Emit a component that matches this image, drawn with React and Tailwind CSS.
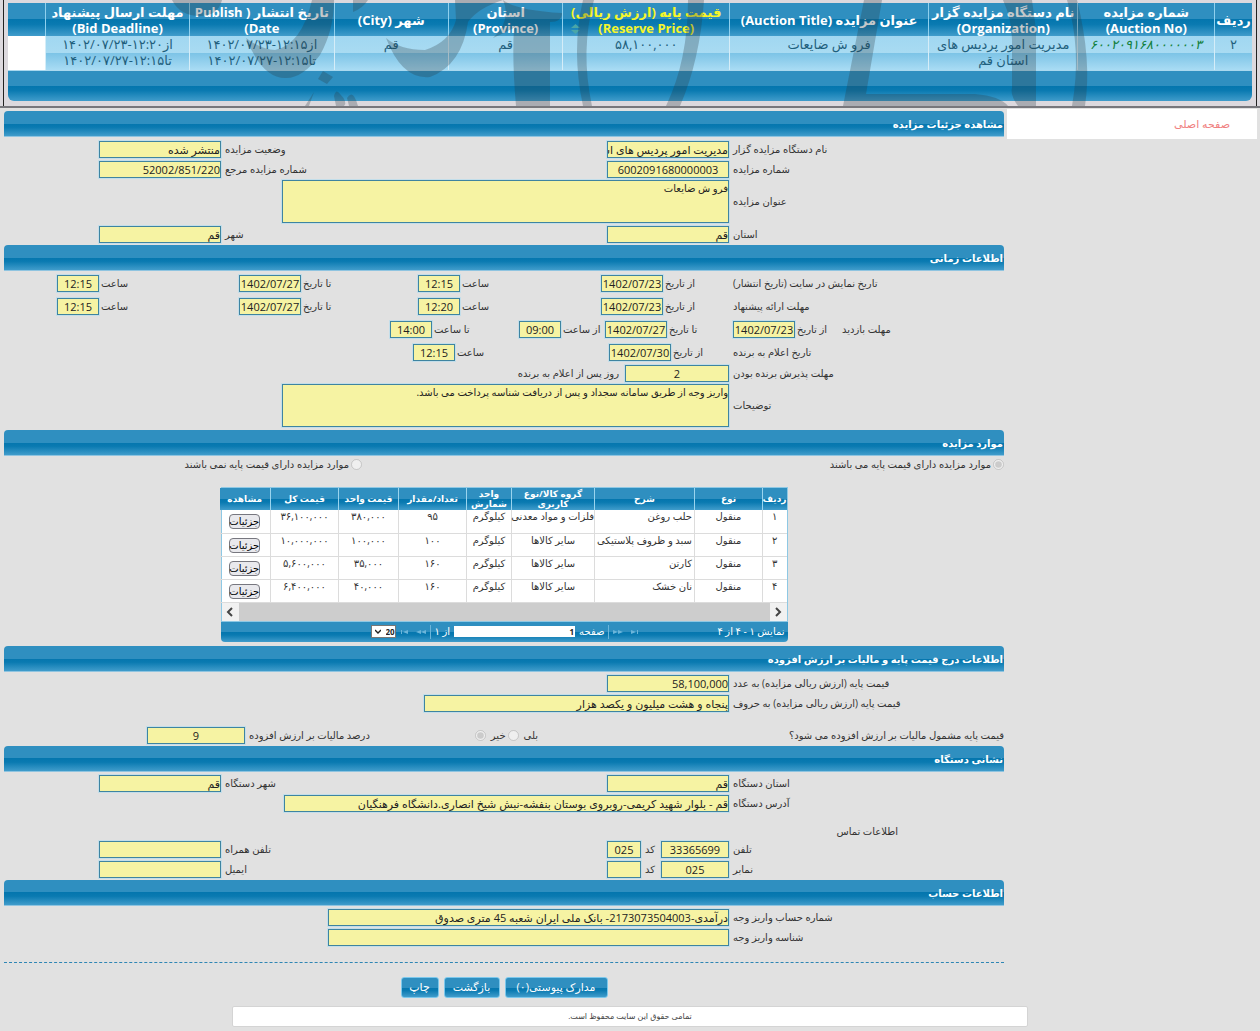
import React from 'react';
import clsx from 'clsx';

const glossyBar = 'bg-[linear-gradient(to_bottom,#2f8fc0_0%,#2f8fc0_50%,#0476ae_50%,#0a7ab1_65%,#409ccb_100%)]';
const glossyRow = 'bg-[linear-gradient(to_bottom,#a0d7f1_0%,#a9dbf2_50%,#7cc3e6_50%,#a9dcf4_100%)]';

const auctionColumns = [
    { title: ['ردیف'], width: 'w-[3%]' },
    { title: ['شماره مزایده', '(Auction No)'], width: 'w-[11%]' },
    { title: ['نام دستگاه مزایده گزار', '(Organization)'], width: 'w-[12%]' },
    { title: ['عنوان مزایده (Auction Title)'], width: 'w-[16%]' },
    { title: ['قیمت پایه (ارزش ریالی)', '(Reserve Price)'], width: 'w-[13.4%]', sorted: true },
    { title: ['استان', '(Province)'], width: 'w-[9.2%]' },
    { title: ['شهر (City)'], width: 'w-[9.2%]' },
    { title: ['تاریخ انتشار ( Publish', 'Date)'], width: 'w-[11.6%]' },
    { title: ['مهلت ارسال پیشنهاد', '(Bid Deadline)'], width: 'w-[11.6%]' },
    { title: [''], width: 'w-[3%]' }
];

const items = [
    { id: '۱', type: 'منقول', name: 'حلب روغن', group: 'فلزات و مواد معدنی', unit: 'کیلوگرم', count: '۹۵', price: '۳۸۰,۰۰۰', total: '۳۶,۱۰۰,۰۰۰' },
    { id: '۲', type: 'منقول', name: 'سبد و ظروف پلاستیکی', group: 'سایر کالاها', unit: 'کیلوگرم', count: '۱۰۰', price: '۱۰۰,۰۰۰', total: '۱۰,۰۰۰,۰۰۰' },
    { id: '۳', type: 'منقول', name: 'کارتن', group: 'سایر کالاها', unit: 'کیلوگرم', count: '۱۶۰', price: '۳۵,۰۰۰', total: '۵,۶۰۰,۰۰۰' },
    { id: '۴', type: 'منقول', name: 'نان خشک', group: 'سایر کالاها', unit: 'کیلوگرم', count: '۱۶۰', price: '۴۰,۰۰۰', total: '۶,۴۰۰,۰۰۰' }
];

const itemColumns = [
    { title: 'ردیف', width: 'w-[24px]' },
    { title: 'نوع', width: 'w-[68px]' },
    { title: 'شرح', width: 'w-[100px]' },
    { title: 'گروه کالا/نوع کاربری', width: 'w-[83px]' },
    { title: 'واحد شمارش', width: 'w-[45px]' },
    { title: 'تعداد/مقدار', width: 'w-[68px]' },
    { title: 'قیمت واحد', width: 'w-[60px]' },
    { title: 'قیمت کل', width: 'w-[68px]' },
    { title: 'مشاهده', width: 'w-[51px]' }
];

const boxStyle = 'border border-[#3f84a0] bg-[#f6f3a3] text-[#222] outline-none shadow-[0_0_0_1px_#c3deea]';

function Watermark() {
    return (
        <svg className="absolute inset-0 w-full h-full pointer-events-none" viewBox="0 0 1260 106" preserveAspectRatio="none" aria-hidden="true">
            <g fill="#2b3a42" fillOpacity="0.28">
                <path d="M172 0H222Q218 16 200 16Q180 16 172 0Z" />
                <path d="M246 38Q262 50 275 50Q302 44 312 0H334Q334 30 320 55Q302 79 285 78Q262 78 246 38Z" />
                <path d="M323 71L333 77L327 84L318 79Z" />
                <path d="M314 92L305 106H309Z" />
                <path d="M334 96Q336 88 340 94Q348 102 344 106H336Z" />
                <path d="M347 98Q353 88 358 106H349Z" />
                <path d="M353 0H368Q363 8 353 12Z" />
                <path d="M386 38Q400 50 425 50Q450 42 456 20L455 0H503Q478 8 468 22Q462 65 430 77Q402 80 386 38Z" />
                <path d="M503 0Q515 10 562 13Q562 22 550 22V106H516Q512 60 514 28L493 38Q512 20 503 0Z" />
                <path d="M583 0H594Q580 50 592 106H583Q571 50 583 0Z" />
                <path d="M688 0H704Q700 60 680 106H666Q688 60 688 0Z" />
                <path d="M864 0H882L866 94H975Q1000 96 1008 106H843Z" />
                <path d="M1003 0H1032L1036 30V106H1018Q1010 95 1012 88V40Q1012 20 1003 0Z" />
                <path d="M1067 0H1077Q1092 60 1085 106H1072Q1082 50 1067 0Z" />
            </g>
        </svg>
    );
}

function AuctionSummary() {
    const cell = 'border-l border-[#d5edf8] last:border-l-0 align-top px-[3px]';
    return (
        <header className="relative bg-[#dcd9de] border-b-2 border-[#77777c] px-[3px]">
            <div className="border-l border-r border-[#222] pt-[3px] pb-[5px] px-[4px]">
                <table className="w-full table-fixed border-collapse text-[13px] leading-[16px] text-center">
                    <thead>
                        <tr className={clsx('h-[33px] text-white', glossyBar)}>
                            {auctionColumns.map((column, index) => (
                                <th key={index} className={clsx('p-0 font-bold align-middle whitespace-nowrap border-l border-[#8fd0ee] last:border-l-0', column.width, column.sorted && 'relative text-[#f6f62a]')}>
                                    {column.title.map((line) => <div key={line}>{line}</div>)}
                                    {column.sorted && (
                                        <svg className="absolute left-[8px] bottom-[2px] w-[9px] h-[10px]" viewBox="0 0 9 10" fill="#4aa6a8">
                                            <path d="M4.5 0L9 4H0ZM0 6H9L4.5 10Z" />
                                        </svg>
                                    )}
                                </th>
                            ))}
                        </tr>
                    </thead>
                    <tbody className="text-[13px] text-[#1f5f7d]">
                        <tr className={clsx('h-[34px]', glossyRow)}>
                            <td className={cell}>۲</td>
                            <td className={clsx(cell, 'italic text-[#12803c]')}>۶۰۰۲۰۹۱۶۸۰۰۰۰۰۰۳</td>
                            <td className={cell}>مدیریت امور پردیس های استان قم</td>
                            <td className={cell}>فرو ش ضایعات</td>
                            <td className={cell}>۵۸,۱۰۰,۰۰۰</td>
                            <td className={cell}>قم</td>
                            <td className={cell}>قم</td>
                            <td className={clsx(cell, 'whitespace-nowrap')}>
                                <div>از<bdi dir="ltr">۱۴۰۲/۰۷/۲۳-۱۲:۱۵</bdi></div>
                                <div>تا<bdi dir="ltr">۱۴۰۲/۰۷/۲۷-۱۲:۱۵</bdi></div>
                            </td>
                            <td className={clsx(cell, 'whitespace-nowrap')}>
                                <div>از<bdi dir="ltr">۱۴۰۲/۰۷/۲۳-۱۲:۲۰</bdi></div>
                                <div>تا<bdi dir="ltr">۱۴۰۲/۰۷/۲۷-۱۲:۱۵</bdi></div>
                            </td>
                            <td className="bg-white" />
                        </tr>
                    </tbody>
                </table>
                <div className={clsx('h-[31px] rounded-b-md border-t border-[#a9d8ee]', glossyBar)} />
            </div>
            <Watermark />
        </header>
    );
}

function Bar({ children }) {
    return (
        <h2 className={clsx('h-[26px] leading-[26px] rounded-t-[4px] border-b border-[#8fc4e0] px-px text-[10px] font-bold text-white', glossyBar)}>
            {children}
        </h2>
    );
}

function Row({ className, children }) {
    return <div className={clsx('flex items-center', className || 'h-[20px]')}>{children}</div>;
}

// Label pushed against the field on its left
function Label({ htmlFor, width, className, children }) {
    return <label htmlFor={htmlFor} className={clsx('shrink-0 text-left whitespace-nowrap pl-[4px]', width, className)}>{children}</label>;
}

function Box({ id, value, width, center }) {
    return (
        <input
            id={id}
            type="text"
            readOnly
            defaultValue={value}
            className={clsx('shrink-0 h-[17px] p-0 text-[11px] leading-[15px]', boxStyle, width, center ? 'text-center' : 'text-right')}
        />
    );
}

// One date or time with its caption, aligned to the left edge of its column
function Slot({ id, label, value, width, date }) {
    return (
        <div className={clsx('shrink-0 flex items-center justify-end', width)}>
            <label htmlFor={id} className="pl-[2px] whitespace-nowrap">{label}</label>
            <Box id={id} value={value} width={date ? 'w-[62px]' : 'w-[42px]'} center />
        </div>
    );
}

function Pair({ id, label, value }) {
    return (
        <>
            <Label htmlFor={id} width="flex-1">{label}</Label>
            <Box id={id} value={value} width="w-[122px]" />
            <div className="shrink-0 w-[95px]" />
        </>
    );
}

function ItemsTable() {
    const cell = 'p-0 align-top border-l border-b border-[#dcdcdc] last:border-l-0';
    return (
        <div className="w-[567px] mx-auto mt-[14px] mb-[4px] text-[10px]">
            <div className="border border-[#8ec8e4] bg-white">
                <table className="w-full table-fixed border-collapse text-center leading-[12px] text-[#333]">
                    <thead>
                        <tr className={clsx('h-[22px] text-white text-[9px] leading-[10px]', glossyBar)}>
                            {itemColumns.map((column) => (
                                <th key={column.title} className={clsx('p-0 font-bold border-l border-[#9ad4ee] last:border-l-0', column.width)}>{column.title}</th>
                            ))}
                        </tr>
                    </thead>
                    <tbody>
                        {items.map((item) => (
                            <tr key={item.id} className="h-[23px]">
                                <td className={cell}>{item.id}</td>
                                <td className={cell}>{item.type}</td>
                                <td className={clsx(cell, 'text-right pr-[2px] whitespace-nowrap')}>{item.name}</td>
                                <td className={clsx(cell, 'whitespace-nowrap')}>{item.group}</td>
                                <td className={cell}>{item.unit}</td>
                                <td className={cell}>{item.count}</td>
                                <td className={cell}>{item.price}</td>
                                <td className={cell}>{item.total}</td>
                                <td className={clsx(cell, 'pt-[4px]')}>
                                    <button type="button" className="block mx-auto w-[31px] h-[15px] rounded-[4px] border border-[#77777f] bg-[#e9e9ed] leading-[13px] text-black">جزئیات</button>
                                </td>
                            </tr>
                        ))}
                    </tbody>
                </table>
                <div className="flex justify-between h-[18px] bg-[#cdcdcd]">
                    <button type="button" aria-label="راست" className="w-[17px] bg-[#f1f1f1] flex items-center justify-center">
                        <svg className="w-[8px] h-[10px]" viewBox="0 0 8 10" fill="none" stroke="#444" strokeWidth="2"><path d="M2 1L6 5L2 9" /></svg>
                    </button>
                    <button type="button" aria-label="چپ" className="w-[17px] bg-[#f1f1f1] flex items-center justify-center">
                        <svg className="w-[8px] h-[10px]" viewBox="0 0 8 10" fill="none" stroke="#444" strokeWidth="2"><path d="M6 1L2 5L6 9" /></svg>
                    </button>
                </div>
            </div>
            <div className={clsx('flex items-center h-[20px] rounded-b-[4px] px-[3px] text-[10px] text-white', glossyBar)}>
                <span className="whitespace-nowrap">نمایش ۱ - ۴ از ۴</span>
                <div className="flex-1" />
                <svg className="w-[26px] h-[6px]" viewBox="0 0 26 6" fill="#6bb5da">
                    <path d="M0 1L5 3L0 5ZM5 1L10 3L5 5ZM18 1L23 3L18 5ZM24 1H25V5H24Z" />
                </svg>
                <div className="w-px h-[14px] mx-[4px] bg-[#6bb5da]" />
                <label htmlFor="page">صفحه</label>
                <input id="page" type="text" defaultValue="1" className="w-[121px] h-[11px] mx-[4px] px-px bg-white text-right text-[8px] font-bold text-[#222]" />
                <span className="whitespace-nowrap">از ۱</span>
                <div className="w-px h-[14px] mx-[4px] bg-[#6bb5da]" />
                <svg className="w-[26px] h-[6px]" viewBox="0 0 26 6" fill="#6bb5da">
                    <path d="M26 1L21 3L26 5ZM21 1L16 3L21 5ZM8 1L3 3L8 5ZM1 1H2V5H1Z" />
                </svg>
                <div className="relative mr-[4px] ml-[147px]">
                    <select aria-label="تعداد در صفحه" dir="ltr" className="block w-[25px] h-[13px] appearance-none border border-[#777] bg-white pl-[14px] text-[8px] leading-[11px] font-bold text-[#222]">
                        <option>20</option>
                    </select>
                    <svg className="absolute left-[4px] top-[4px] w-[6px] h-[5px] pointer-events-none" viewBox="0 0 6 5" fill="none" stroke="#222" strokeWidth="1.4"><path d="M0 1L3 4L6 1" /></svg>
                </div>
            </div>
        </div>
    );
}

function ActionButton({ width, children }) {
    return (
        <button type="button" className={clsx('h-[21px] rounded-[3px] border border-[#7cc8ec] text-[11px] text-white', glossyBar, width)}>
            {children}
        </button>
    );
}

export default function App() {
    return (
        <div dir="rtl" className="min-h-screen bg-[#e1e1e1] font-['Open_Sans','DejaVu_Sans',sans-serif] text-[10px] text-[#333] overflow-hidden">
            <AuctionSummary />

            <div className="flex items-start pt-[3px] pl-[4px] pr-[3px]">
                <aside className="shrink-0 w-[250px] h-[30px] -mt-[2px] bg-white flex items-center pr-[27px]">
                    <a href="#home" className="text-[11px] text-[#f08080]">صفحه اصلی</a>
                </aside>

                <main className="flex-1 mr-[3px]">
                    <section className="mb-px">
                        <Bar>مشاهده جزئیات مزایده</Bar>
                        <div className="pt-[2px]">
                            <Row>
                                <Label htmlFor="org" width="w-[275px]">نام دستگاه مزایده گزار</Label>
                                <Box id="org" value="مدیریت امور پردیس های استان قم" width="w-[122px]" />
                                <Pair id="status" label="وضعیت مزایده" value="منتشر شده" />
                            </Row>
                            <Row>
                                <Label htmlFor="number" width="w-[275px]">شماره مزایده</Label>
                                <Box id="number" value="6002091680000003" width="w-[122px]" center />
                                <Pair id="reference" label="شماره مزایده مرجع" value="52002/851/220" />
                            </Row>
                            <Row className="h-[45px]">
                                <Label htmlFor="title" width="w-[275px]">عنوان مزایده</Label>
                                <textarea id="title" readOnly defaultValue="فرو ش ضایعات" className={clsx('block w-[447px] h-[43px] p-0 resize-none leading-[14px]', boxStyle)} />
                            </Row>
                            <Row>
                                <Label htmlFor="province" width="w-[275px]">استان</Label>
                                <Box id="province" value="قم" width="w-[122px]" />
                                <Pair id="city" label="شهر" value="قم" />
                            </Row>
                        </div>
                    </section>

                    <section className="mb-[2px]">
                        <Bar>اطلاعات زمانی</Bar>
                        <div className="pt-px">
                            <Row className="h-[23px]">
                                <Label htmlFor="show-from" width="w-[275px]">تاریخ نمایش در سایت (تاریخ انتشار)</Label>
                                <Slot id="show-from" label="از تاریخ" value="1402/07/23" width="w-[128px]" date />
                                <Slot id="show-from-time" label="ساعت" value="12:15" width="w-[183px]" />
                                <Slot id="show-to" label="تا تاریخ" value="1402/07/27" width="w-[179px]" date />
                                <Slot id="show-to-time" label="ساعت" value="12:15" width="w-[182px]" />
                            </Row>
                            <Row className="h-[23px]">
                                <Label htmlFor="offer-from" width="w-[275px]">مهلت ارائه پیشنهاد</Label>
                                <Slot id="offer-from" label="از تاریخ" value="1402/07/23" width="w-[128px]" date />
                                <Slot id="offer-from-time" label="ساعت" value="12:20" width="w-[183px]" />
                                <Slot id="offer-to" label="تا تاریخ" value="1402/07/27" width="w-[179px]" date />
                                <Slot id="offer-to-time" label="ساعت" value="12:15" width="w-[182px]" />
                            </Row>
                            <Row className="h-[23px]">
                                <Label htmlFor="visit-from" width="w-[166px]">مهلت بازدید</Label>
                                <Slot id="visit-from" label="از تاریخ" value="1402/07/23" width="w-[105px]" date />
                                <Slot id="visit-to" label="تا تاریخ" value="1402/07/27" width="w-[128px]" date />
                                <Slot id="visit-from-time" label="از ساعت" value="09:00" width="w-[86px]" />
                                <Slot id="visit-to-time" label="تا ساعت" value="14:00" width="w-[129px]" />
                            </Row>
                            <Row className="h-[22px]">
                                <Label htmlFor="winner-date" width="w-[275px]">تاریخ اعلام به برنده</Label>
                                <Slot id="winner-date" label="از تاریخ" value="1402/07/30" width="w-[120px]" date />
                                <Slot id="winner-time" label="ساعت" value="12:15" width="w-[196px]" />
                            </Row>
                            <Row>
                                <Label htmlFor="accept" width="w-[275px]">مهلت پذیرش برنده بودن</Label>
                                <Box id="accept" value="2" width="w-[104px]" center />
                                <span className="pr-[6px]">روز پس از اعلام به برنده</span>
                            </Row>
                            <Row className="h-[45px]">
                                <Label htmlFor="notes" width="w-[275px]">توضیحات</Label>
                                <textarea id="notes" readOnly defaultValue="واریز وجه از طریق سامانه سجداد و پس از دریافت شناسه پرداخت می باشد." className={clsx('block w-[447px] h-[43px] p-0 resize-none leading-[14px]', boxStyle)} />
                            </Row>
                        </div>
                    </section>

                    <section>
                        <Bar>موارد مزایده</Bar>
                        <Row className="h-[17px]">
                            <label className="flex items-center gap-[2px] w-[642px]">
                                <input type="radio" name="base-price" defaultChecked disabled className="w-[11px] h-[11px]" />
                                موارد مزایده دارای قیمت پایه می باشند
                            </label>
                            <label className="flex items-center gap-[2px]">
                                <input type="radio" name="base-price" disabled className="w-[11px] h-[11px]" />
                                موارد مزایده دارای قیمت پایه نمی باشند
                            </label>
                        </Row>
                        <ItemsTable />
                    </section>

                    <section>
                        <Bar>اطلاعات درج قیمت پایه و مالیات بر ارزش افزوده</Bar>
                        <div className="pt-[2px]">
                            <Row>
                                <Label htmlFor="price" width="w-[275px]">قیمت پایه (ارزش ریالی مزایده) به عدد</Label>
                                <Box id="price" value="58,100,000" width="w-[122px]" />
                            </Row>
                            <Row>
                                <Label htmlFor="price-words" width="w-[275px]">قیمت پایه (ارزش ریالی مزایده) به حروف</Label>
                                <Box id="price-words" value="پنجاه و هشت میلیون و یکصد هزار" width="w-[305px]" />
                            </Row>
                            <Row className="h-[20px] mt-[12px]">
                                <span className="w-[466px]">قیمت پایه مشمول مالیات بر ارزش افزوده می شود؟</span>
                                <label className="flex items-center gap-[5px]">
                                    بلی
                                    <input type="radio" name="vat" disabled className="w-[11px] h-[11px]" />
                                </label>
                                <label className="flex items-center gap-[5px] mr-[2px]">
                                    خیر
                                    <input type="radio" name="vat" defaultChecked disabled className="w-[11px] h-[11px]" />
                                </label>
                                <Label htmlFor="vat-percent" width="flex-1">درصد مالیات بر ارزش افزوده</Label>
                                <Box id="vat-percent" value="9" width="w-[98px]" center />
                                <div className="shrink-0 w-[143px]" />
                            </Row>
                        </div>
                    </section>

                    <section>
                        <Bar>نشانی دستگاه</Bar>
                        <div className="pt-[2px]">
                            <Row>
                                <Label htmlFor="org-province" width="w-[275px]">استان دستگاه</Label>
                                <Box id="org-province" value="قم" width="w-[122px]" />
                                <Pair id="org-city" label="شهر دستگاه" value="قم" />
                            </Row>
                            <Row>
                                <Label htmlFor="address" width="w-[275px]">آدرس دستگاه</Label>
                                <Box id="address" value="قم - بلوار شهید کریمی-روبروی بوستان بنفشه-نبش شیخ انصاری.دانشگاه فرهنگیان" width="w-[445px]" />
                            </Row>
                            <Row className="h-[17px] mt-[9px] pr-[106px]">اطلاعات تماس</Row>
                            <Row>
                                <Label htmlFor="phone" width="w-[275px]">تلفن</Label>
                                <Box id="phone" value="33365699" width="w-[68px]" center />
                                <Label htmlFor="phone-code" width="w-[20px]">کد</Label>
                                <Box id="phone-code" value="025" width="w-[34px]" center />
                                <Pair id="mobile" label="تلفن همراه" value="" />
                            </Row>
                            <Row>
                                <Label htmlFor="fax" width="w-[275px]">نمابر</Label>
                                <Box id="fax" value="025" width="w-[68px]" center />
                                <Label htmlFor="fax-code" width="w-[20px]">کد</Label>
                                <Box id="fax-code" value="" width="w-[34px]" center />
                                <Pair id="email" label="ایمیل" value="" />
                            </Row>
                        </div>
                    </section>

                    <section>
                        <Bar>اطلاعات حساب</Bar>
                        <div className="pt-[2px]">
                            <Row>
                                <Label htmlFor="account" width="w-[275px]">شماره حساب واریز وجه</Label>
                                <Box id="account" value="درآمدی-2173073504003- بانک ملی ایران شعبه 45 متری صدوق" width="w-[401px]" />
                            </Row>
                            <Row>
                                <Label htmlFor="deposit" width="w-[275px]">شناسه واریز وجه</Label>
                                <Box id="deposit" value="" width="w-[401px]" />
                            </Row>
                        </div>
                    </section>

                    <div className="mt-[14px] border-t border-dashed border-[#2f86b4]" />
                    <div className="flex justify-center gap-[5px] pt-[14px] pb-[8px]">
                        <ActionButton width="w-[103px]">مدارک پیوستی(۰)</ActionButton>
                        <ActionButton width="w-[56px]">بازگشت</ActionButton>
                        <ActionButton width="w-[38px]">چاپ</ActionButton>
                    </div>
                </main>
            </div>

            <footer className="w-[796px] h-[21px] mx-auto rounded-[2px] border border-[#d4d4d4] bg-white flex items-center justify-center text-[8px] text-[#444]">
                تمامی حقوق این سایت محفوظ است.
            </footer>
        </div>
    );
}
